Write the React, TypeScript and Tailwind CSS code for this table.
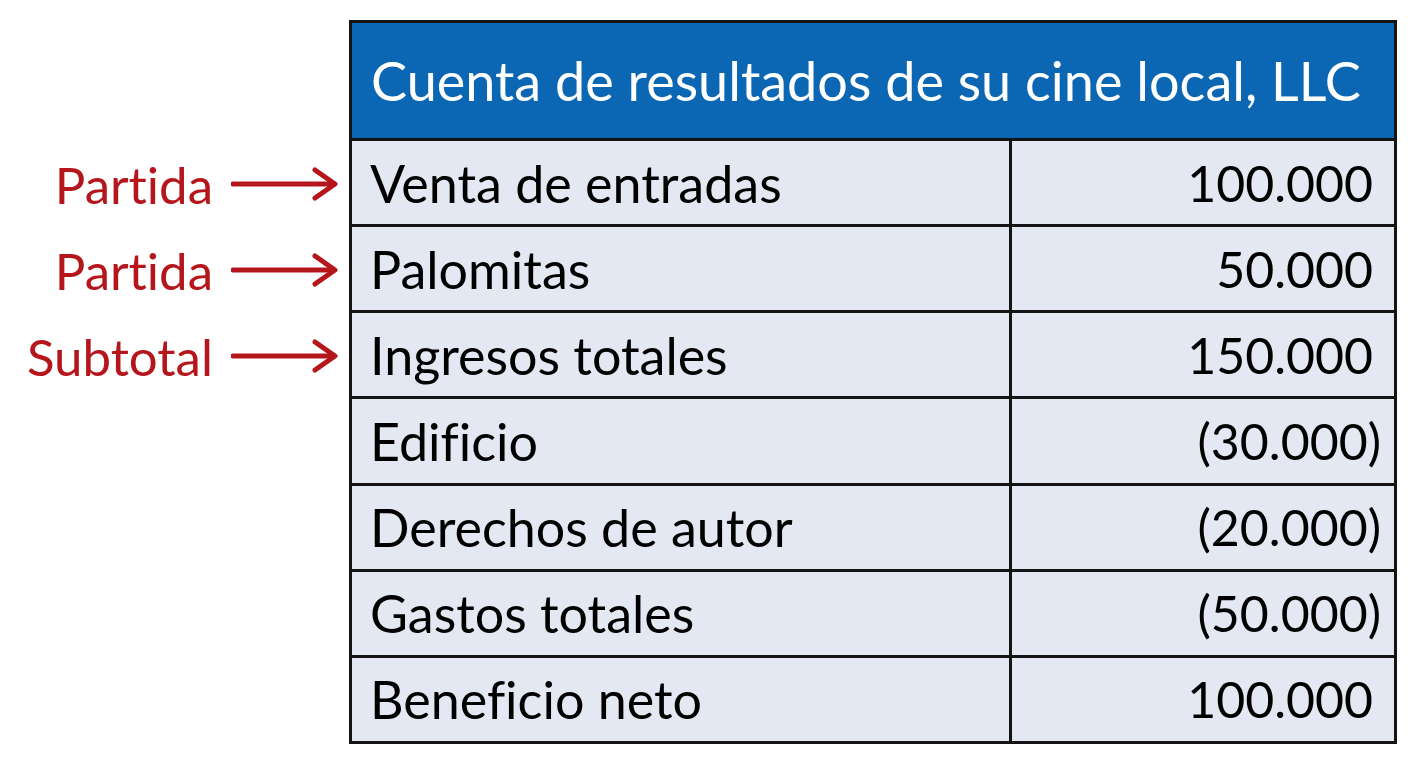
import React from 'react';

type Row = { label: string; value: string; negative?: boolean; note?: string };

const rows: Row[] = [
  { label: 'Venta de entradas', value: '100.000', note: 'Partida' },
  { label: 'Palomitas', value: '50.000', note: 'Partida' },
  { label: 'Ingresos totales', value: '150.000', note: 'Subtotal' },
  { label: 'Edificio', value: '(30.000)', negative: true },
  { label: 'Derechos de autor', value: '(20.000)', negative: true },
  { label: 'Gastos totales', value: '(50.000)', negative: true },
  { label: 'Beneficio neto', value: '100.000' },
];

const Arrow: React.FC = () => (
  <svg width="110" height="36" viewBox="0 0 110 36" className="shrink-0">
    <path d="M2 18 H102" stroke="#b5161b" strokeWidth="5" strokeLinecap="round" fill="none" />
    <path d="M84 4 L104 18 L84 32" stroke="#b5161b" strokeWidth="5" strokeLinecap="round" strokeLinejoin="round" fill="none" />
  </svg>
);

const App: React.FC = () => {
  return (
    <div
      className="w-[1408px] h-[768px] bg-white flex pt-[20px] [font-variant-ligatures:none]"
      style={{ fontFamily: 'Lato, "Open Sans", sans-serif' }}
    >
      {/* side notes */}
      <div className="w-[349px] flex flex-col">
        <div className="h-[121px]" />
        {rows.filter((r) => r.note).map((r, i) => (
          <div key={i} className="h-[86px] flex items-center justify-end gap-[18px] pr-[8px]">
            <span className="text-[51px] text-[#b5161b] leading-none">{r.note}</span>
            <Arrow />
          </div>
        ))}
      </div>

      {/* statement table */}
      <div className="w-[1048px] h-[724px] border-[3px] border-[#141414] flex flex-col">
        <div className="h-[118px] bg-[#0b67b4] border-b-[3px] border-[#141414] flex items-center pl-[19px]">
          <span className="text-[54px] text-white leading-none">Cuenta de resultados de su cine local, LLC</span>
        </div>
        {rows.map((r, i) => (
          <div
            key={i}
            className={`flex-1 flex bg-[#e4e8f3] ${i < rows.length - 1 ? 'border-b-[3px] border-[#141414]' : ''}`}
          >
            <div className="w-[660px] border-r-[3px] border-[#141414] flex items-center pl-[18px]">
              <span className="text-[52px] text-black leading-none">{r.label}</span>
            </div>
            <div className={`flex-1 flex items-center justify-end ${r.negative ? 'pr-[13px]' : 'pr-[21px]'}`}>
              <span className="text-[50px] text-black leading-none">{r.value}</span>
            </div>
          </div>
        ))}
      </div>
    </div>
  );
};

export default App;
